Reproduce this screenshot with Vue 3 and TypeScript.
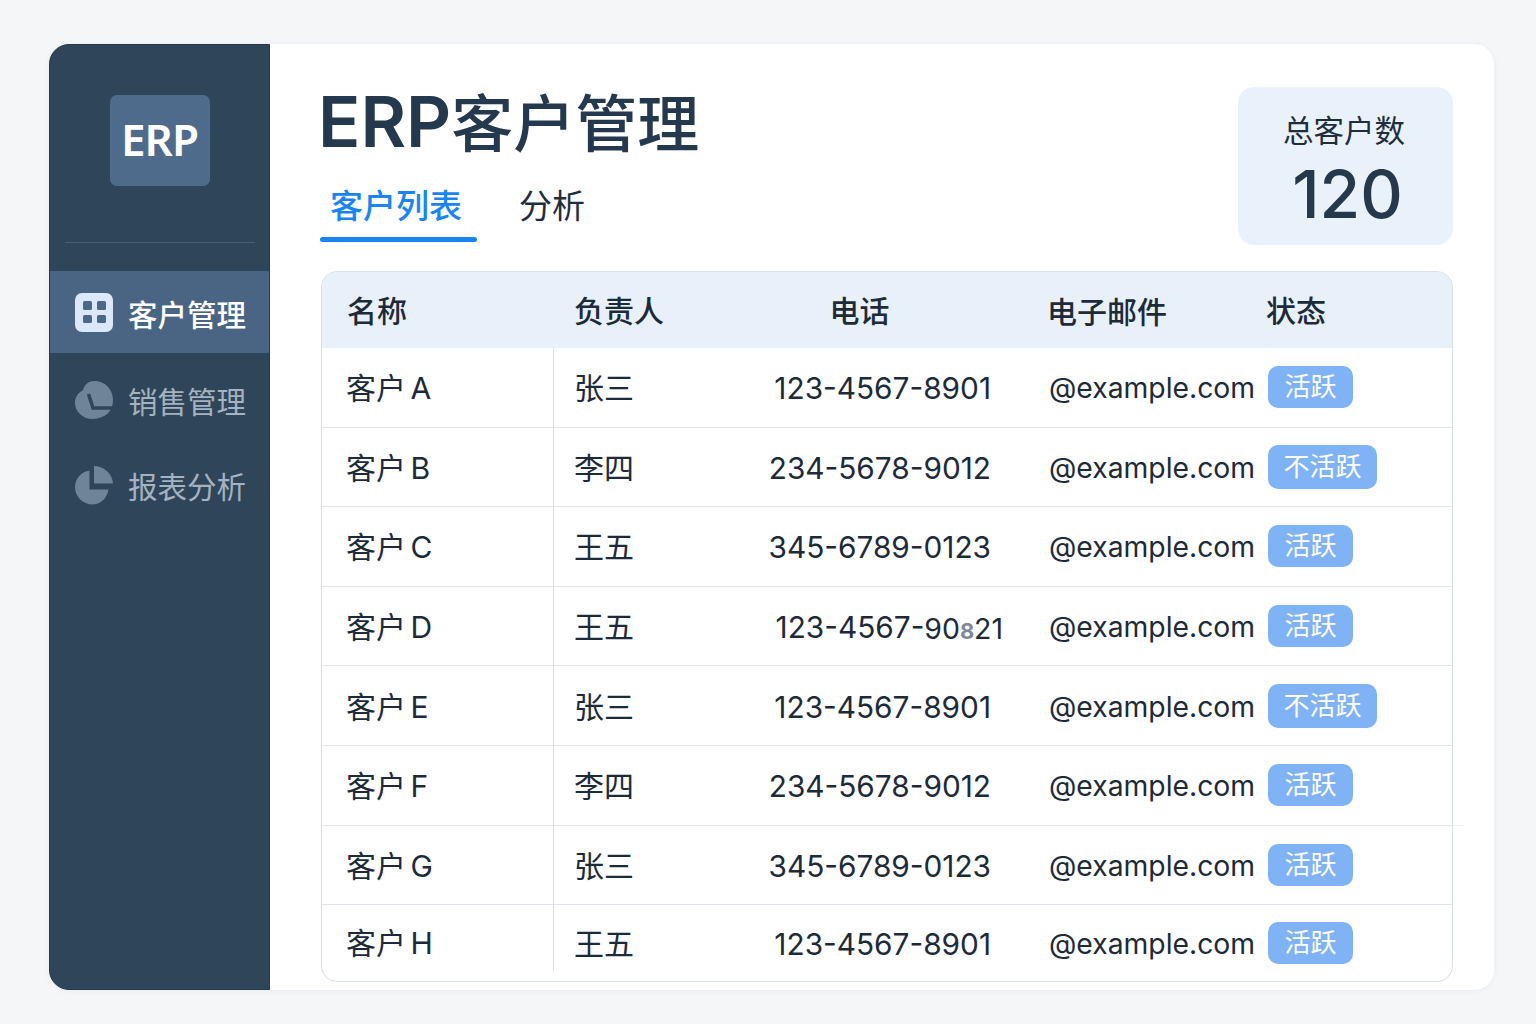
<script setup lang="ts">
type Customer = {
  name: string
  owner: string
  phone: string
  active: boolean
}

const customers: Customer[] = [
  { name: '客户 A', owner: '张三', phone: '123-4567-8901', active: true },
  { name: '客户 B', owner: '李四', phone: '234-5678-9012', active: false },
  { name: '客户 C', owner: '王五', phone: '345-6789-0123', active: true },
  { name: '客户 D', owner: '王五', phone: '', active: true },
  { name: '客户 E', owner: '张三', phone: '123-4567-8901', active: false },
  { name: '客户 F', owner: '李四', phone: '234-5678-9012', active: true },
  { name: '客户 G', owner: '张三', phone: '345-6789-0123', active: true },
  { name: '客户 H', owner: '王五', phone: '123-4567-8901', active: true },
]
</script>

<template>
  <div class="page">
    <div class="shell">
      <aside class="sidebar">
        <div class="logo">ERP</div>
        <div class="divider"></div>
        <nav class="nav">
          <a class="nav-item active">
            <svg class="nav-icon" viewBox="0 0 38 39" aria-hidden="true">
              <rect width="38" height="39" rx="7" fill="#dbe7fb" />
              <rect x="8" y="8" width="9" height="9" rx="1.5" fill="#4d6786" />
              <rect x="22" y="8" width="9" height="9" rx="1.5" fill="#4d6786" />
              <rect x="8" y="22" width="9" height="8" rx="1.5" fill="#4d6786" />
              <rect x="22" y="22" width="9" height="8" rx="1.5" fill="#4d6786" />
            </svg>
            <span>客户管理</span>
          </a>
          <a class="nav-item">
            <svg class="nav-icon" viewBox="0 0 38 39" aria-hidden="true">
              <path d="M19 0C30 0 38 8 38 19C38 31 30 37 18 38C7 38 0 30 0 22C0 16 3 12 8 9C10 3 14 0 19 0Z" fill="#6f8399" />
              <path d="M13.5 13L18 27H38" fill="none" stroke="#2f4559" stroke-width="3.5" />
            </svg>
            <span>销售管理</span>
          </a>
          <a class="nav-item">
            <svg class="nav-icon" viewBox="0 0 38 39" aria-hidden="true">
              <path d="M14.5 4.5V23.5H33.5C32 33 25 38.500 17.500 38.500C8 38.500 0 30.500 0 21.500C0 12.500 6.500 5.500 14.500 4.500Z" fill="#6f8399" />
              <path d="M19 0C29 0 37.500 8 38 17.500H19Z" fill="#6f8399" />
            </svg>
            <span>报表分析</span>
          </a>
        </nav>
      </aside>

      <main class="main">
        <header class="head">
          <div class="head-left">
            <h1 class="title"><span class="title-latin">ERP</span>客户管理</h1>
            <div class="tabs">
              <a class="tab tab-on">客户列表</a>
              <a class="tab">分析</a>
            </div>
          </div>
          <div class="stat">
            <div class="stat-label">总客户数</div>
            <div class="stat-value">120</div>
          </div>
        </header>

        <section class="table">
          <div class="row row-head">
            <div class="cell cell-name">名称</div>
            <div class="cell cell-owner">负责人</div>
            <div class="cell cell-phone-head">电话</div>
            <div class="cell cell-mail">电子邮件</div>
            <div class="cell">状态</div>
          </div>
          <div v-for="c in customers" :key="c.name" class="row">
            <div class="cell cell-name">{{ c.name }}</div>
            <div class="cell cell-owner">{{ c.owner }}</div>
            <div class="cell cell-phone">
              <template v-if="c.phone">{{ c.phone }}</template>
              <template v-else>123-4567-<span class="phone-small">90<span class="smudge">8</span>21</span></template>
            </div>
            <div class="cell cell-mail">@example.com</div>
            <div class="cell">
              <span class="badge" :class="{ 'badge-off': !c.active }">{{ c.active ? '活跃' : '不活跃' }}</span>
            </div>
          </div>
        </section>
        <div class="stray-line"></div>
      </main>
    </div>
  </div>
</template>

<style>
html,
body {
  margin: 0;
  background: #f4f6f8;
}
</style>

<style scoped>
.page {
  box-sizing: border-box;
  width: 1536px;
  height: 1024px;
  padding: 44px 42px 34px 49px;
  background: #f4f6f8;
  font-family: Inter, 'Noto Sans CJK SC', sans-serif;
  color: #1c2a39;
  overflow: hidden;
}

.shell {
  display: flex;
  height: 946px;
  background: #fff;
  border-radius: 20px;
  box-shadow: 0 1px 6px rgba(60, 80, 100, 0.05);
}

.sidebar {
  flex: 0 0 221px;
  box-sizing: border-box;
  display: flex;
  flex-direction: column;
  background: #2f4559;
  border: 1px solid #26394b;
  border-radius: 20px 0 0 20px;
}

.logo {
  display: flex;
  align-items: center;
  justify-content: center;
  box-sizing: border-box;
  width: 100px;
  height: 91px;
  margin: 50px auto 0;
  padding-bottom: 4px;
  background: #4f6b8c;
  border-radius: 7px;
  color: #fff;
  font-family: 'Noto Sans', sans-serif;
  font-size: 44px;
  font-weight: 600;
  letter-spacing: -1px;
}

.divider {
  height: 1px;
  margin: 56px 14px 28px 15px;
  background: #486076;
}

.nav {
  display: flex;
  flex-direction: column;
  gap: 3px;
}

.nav-item {
  display: flex;
  align-items: center;
  gap: 15px;
  height: 82px;
  padding-left: 25px;
  color: #a5b2c0;
  font-size: 29.500px;
}

.nav-item.active {
  margin-bottom: 3px;
  background: #4a6583;
  color: #fff;
  font-weight: 500;
}

.nav-item.active span {
  padding-top: 2px;
}

.nav-icon {
  flex: none;
  width: 38px;
  height: 39px;
}

.main {
  position: relative;
  flex: 1;
  min-width: 0;
  padding: 43px 41px 0 50px;
}

.stray-line {
  position: absolute;
  top: 781px;
  right: 30px;
  width: 11px;
  height: 1px;
  background: #eef1f4;
}

.head {
  display: flex;
  justify-content: space-between;
  align-items: flex-start;
}

.title {
  margin: 0 0 0 -2px;
  color: #25394e;
  font-size: 62px;
  font-weight: 500;
  line-height: 70px;
  white-space: nowrap;
}

.title-latin {
  font-size: 70px;
  font-weight: 600;
}

.tabs {
  display: flex;
  gap: 57px;
  margin-top: 23px;
  padding-left: 10px;
}

.tab {
  color: #1f2d3d;
  font-size: 33px;
  line-height: 46px;
}

.tab-on {
  color: #1a85f0;
  font-weight: 500;
}

.tab::after {
  content: '';
  display: block;
  height: 5px;
  margin: 8px -15px 0 -10px;
  border-radius: 3px;
}

.tab-on::after {
  background: #1a85f0;
}

.stat {
  width: 215px;
  height: 158px;
  box-sizing: border-box;
  padding-top: 23px;
  background: #e9f2fb;
  border-radius: 16px;
  text-align: center;
}

.stat-label {
  margin-right: 3px;
  font-size: 30.500px;
  line-height: 42px;
  color: #1f2d3d;
}

.stat-value {
  margin: 2px 0 0 4px;
  color: #25394c;
  font-size: 66px;
  font-weight: 500;
  line-height: 80px;
}

.table {
  box-sizing: border-box;
  margin: 26px 0 0 1px;
  height: 711px;
  border: 1px solid #d9e0e7;
  border-radius: 16px;
  overflow: hidden;
}

.row {
  display: grid;
  grid-template-columns: 232px 174px 300px 238px 1fr;
  align-items: stretch;
  height: 79.600px;
  box-sizing: border-box;
  border-bottom: 1px solid #e1e6ea;
  font-size: 30px;
}

.row:last-child {
  height: 76px;
  border-bottom: 0;
}

.row-head {
  height: 76px;
  background: #e8f1fa;
  border-bottom: 0;
  font-weight: 500;
}

.cell {
  display: flex;
  align-items: center;
  min-width: 0;
  white-space: nowrap;
}

.cell-name {
  padding: 0 0 2px 24px;
  border-right: 1px solid #d9e0e7;
  word-spacing: -4px;
}

.row-head .cell {
  padding-bottom: 3px;
}

.row-head .cell-name {
  padding-left: 25px;
  border-right: 0;
}

.row:last-child .cell-name {
  margin-bottom: 9px;
  padding-top: 7px;
}

.cell-owner {
  padding: 0 0 2px 20px;
}

.cell-phone {
  justify-content: flex-end;
  padding: 2px 37px 0 0;
  font-size: 29.800px;
}

.cell-phone-head {
  justify-content: center;
  padding-right: 37px;
}

.cell-mail {
  padding: 2px 0 0 21px;
  font-size: 28.300px;
}

.row-head .cell-mail {
  padding-left: 19px;
  font-size: 30px;
}

.phone-small {
  margin-right: -12px;
  padding-top: 3px;
  font-size: 28.500px;
}

.smudge {
  display: inline-block;
  width: 14px;
  color: #7f8894;
  font-size: 22px;
  font-weight: 700;
  text-align: center;
}

.badge {
  margin-left: 2px;
  padding: 0 16.500px;
  height: 42px;
  line-height: 42px;
  border-radius: 10px;
  background: #7fb3f5;
  color: #fff;
  font-size: 26px;
}

.badge-off {
  height: 44px;
  line-height: 44px;
  padding: 0 15.500px;
}
</style>
